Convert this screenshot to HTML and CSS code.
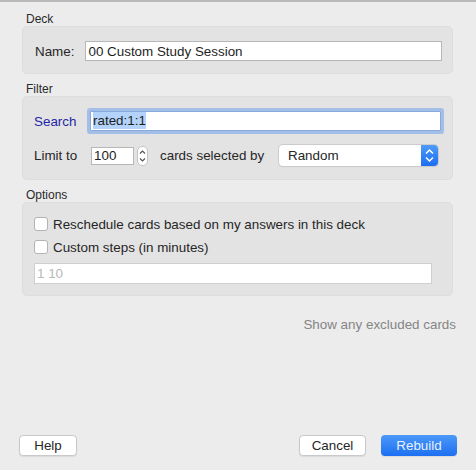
FILE: index.html
```html
<!DOCTYPE html>
<html lang="en">
<head>
    <meta charset="UTF-8">
    <meta name="viewport" content="width=device-width, initial-scale=1.0">
    <title>Custom Study Session</title>
    <link rel="stylesheet" href="styles.css">
</head>
<body>

    <!-- Deck -->
    <div class="section-title first">Deck</div>
    <div class="group group-deck">
        <label for="deck-name">Name:</label>
        <input type="text" id="deck-name" class="field" value="00 Custom Study Session" />
    </div>

    <!-- Filter -->
    <div class="section-title">Filter</div>
    <div class="group group-filter">
        <span class="search-label">Search</span>
        <div class="field search-field"><span class="selected">rated:1:1</span></div>

        <span>Limit to</span>
        <div class="limit-row">
            <div class="field spin-field">100</div>
            <div class="stepper">
                <svg width="11" height="20" viewBox="0 0 11 20">
                    <polyline points="3,7.5 5.5,5 8,7.5" fill="none" stroke="#555" stroke-width="1.2" />
                    <polyline points="3,12.5 5.5,15 8,12.5" fill="none" stroke="#555" stroke-width="1.2" />
                </svg>
            </div>
            <span class="selected-by">cards selected by</span>
            <div class="select">
                <span>Random</span>
                <div class="select-arrow">
                    <svg width="17" height="21" viewBox="0 0 17 21">
                        <polyline points="5,8.5 8.5,5 12,8.5" fill="none" stroke="#fff" stroke-width="1.5" />
                        <polyline points="5,12.5 8.5,16 12,12.5" fill="none" stroke="#fff" stroke-width="1.5" />
                    </svg>
                </div>
            </div>
        </div>
    </div>

    <!-- Options -->
    <div class="section-title">Options</div>
    <div class="group group-options">
        <div class="check-row"><span class="checkbox"></span>Reschedule cards based on my answers in this deck</div>
        <div class="check-row"><span class="checkbox"></span>Custom steps (in minutes)</div>
        <input type="text" class="field steps-field" placeholder="1 10" />
    </div>

    <div class="excluded">Show any excluded cards</div>

    <!-- Dialog Buttons -->
    <div class="footer">
        <button class="btn btn-help">Help</button>
        <div class="spacer"></div>
        <button class="btn btn-cancel">Cancel</button>
        <button class="btn btn-primary">Rebuild</button>
    </div>

</body>
</html>
```

FILE: styles.css
```css
/* Global Styles */
html, body {
    margin: 0;
    padding: 0;
}

body {
    height: 470px;
    box-sizing: border-box;
    border-top: 2px solid #b9b9b9;
    background: #ececec;
    font-family: "Liberation Sans", Arial, sans-serif;
    font-size: 13.4px;
    color: #262626;
    display: flex;
    flex-direction: column;
}

/* Section titles */
.section-title {
    margin: 8px 0 0 26px;
    font-size: 12px;
    line-height: 14px;
    color: #2a2a2a;
}

.section-title.first {
    margin-top: 10px;
}

/* Group boxes */
.group {
    margin: 0 23px 0 22px;
    background: #e3e3e3;
    border: 1px solid #dddddd;
    border-radius: 5px;
}

.field {
    box-sizing: border-box;
    height: 20px;
    border: 1px solid #b7b7b7;
    background: #fff;
    font-family: inherit;
    font-size: 13.4px;
    color: #1e1e1e;
    padding: 0 2px;
    line-height: 18px;
    outline: none;
}

/* Deck */
.group-deck {
    padding: 14px 10px 12px 12px;
    display: flex;
    align-items: center;
    gap: 11px;
}

.group-deck .field {
    flex: 1;
}

/* Filter */
.group-filter {
    padding: 14px 11px 13px 11px;
    display: grid;
    grid-template-columns: 46px 1fr;
    column-gap: 11px;
    row-gap: 14px;
    align-items: center;
}

.search-label {
    color: #1f27a6;
}

.search-field {
    margin-left: -1px;
    border-color: #88a9db;
    box-shadow: 0 0 0 3px #a3bfe8;
    border-radius: 1px;
}

.selected {
    background: #b3d3fb;
    padding: 1px 0;
}

.limit-row {
    display: flex;
    align-items: center;
    height: 21px;
}

.spin-field {
    width: 43px;
    height: 18px;
    line-height: 16px;
}

.stepper {
    width: 11px;
    height: 20px;
    margin-left: 3px;
    box-sizing: border-box;
    border: 1px solid #c4c4c4;
    border-radius: 5px;
    background: #fff;
    display: flex;
    align-items: center;
    justify-content: center;
    overflow: hidden;
}

.stepper svg {
    flex: none;
}

.selected-by {
    margin-left: 12px;
}

.select {
    margin-left: auto;
    margin-right: 3px;
    width: 159px;
    height: 21px;
    box-sizing: border-box;
    background: #fff;
    border-radius: 4px;
    box-shadow: 0 0 0 1px #cbcbcb, 0 1px 1px rgba(0, 0, 0, 0.12);
    display: flex;
    align-items: center;
    padding-left: 9px;
    overflow: hidden;
}

.select span {
    flex: 1;
}

.select-arrow {
    width: 17px;
    height: 21px;
    background: linear-gradient(#4f9bfa, #1b6ef1);
}

/* Options */
.group-options {
    padding: 12px 20px 11px 11px;
    display: flex;
    flex-direction: column;
}

.check-row {
    display: flex;
    align-items: center;
    height: 18px;
    gap: 5px;
}

.check-row + .check-row {
    margin-top: 5px;
}

.checkbox {
    width: 14px;
    height: 14px;
    box-sizing: border-box;
    border: 1px solid #b3b3b3;
    border-radius: 3px;
    background: #fff;
}

.steps-field {
    margin-top: 7px;
    height: 21px;
    border-color: #cfcfcf;
}

.steps-field::placeholder {
    color: #b8b8b8;
}

/* Excluded link */
.excluded {
    margin: 22px 20px 0 0;
    text-align: right;
    line-height: 14px;
    color: #858585;
}

/* Footer buttons */
.footer {
    margin-top: auto;
    padding: 0 19px 14px 19px;
    display: flex;
    gap: 15px;
}

.spacer {
    flex: 1;
}

.btn {
    height: 21px;
    box-sizing: border-box;
    font-family: inherit;
    font-size: 13.4px;
    color: #262626;
    background: #fff;
    border: 1px solid #c9c9c9;
    border-radius: 4px;
    box-shadow: 0 1px 1px rgba(0, 0, 0, 0.08);
    padding: 0;
}

.btn-help {
    width: 58px;
}

.btn-cancel {
    width: 67px;
}

.btn-primary {
    width: 76px;
    border: none;
    color: #eaf2ff;
    background: linear-gradient(#4c99f9, #1c6ff1);
}
```
